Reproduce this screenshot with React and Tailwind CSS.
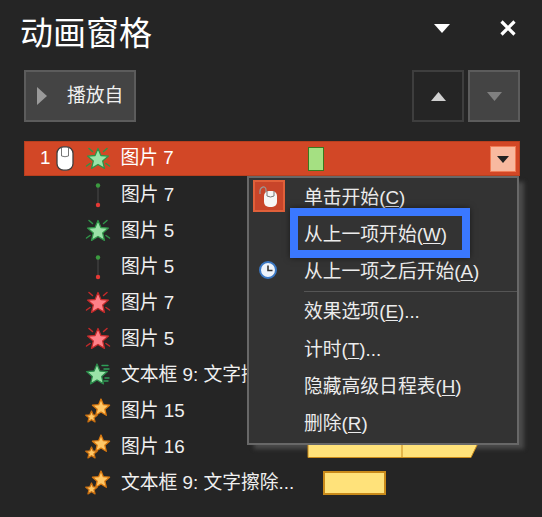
const cjk = { fontFamily: '"Liberation Sans","Noto Sans CJK SC",sans-serif' };

function Star({ fill, stroke, cx = 12, cy = 12, r = 9 }) {
  const pts = [];
  for (let i = 0; i < 10; i++) {
    const rad = i % 2 === 0 ? r : r * 0.45;
    const a = -Math.PI / 2 + (i * Math.PI) / 5;
    pts.push(`${(cx + rad * Math.cos(a)).toFixed(2)},${(cy + rad * Math.sin(a)).toFixed(2)}`);
  }
  return <polygon points={pts.join(" ")} fill={fill} stroke={stroke} strokeWidth="1.3" strokeLinejoin="round" />;
}

function Burst({ fill, stroke }) {
  return (
    <svg width="26" height="26" viewBox="0 0 26 26" className="shrink-0">
      <g stroke={stroke} strokeWidth="1.5" strokeLinecap="round">
        <path d="M4 2.5 L7.5 5.5M22 2.5 L18.5 5.5M1.5 20 L5 17.5M24.5 20 L21 17.5" />
      </g>
      <Star fill={fill} stroke={stroke} cx={13} cy={13.5} r={11} />
    </svg>
  );
}

function Entrance() {
  return (
    <svg width="26" height="26" viewBox="0 0 26 26" className="shrink-0">
      <g stroke="#2f9e58" strokeWidth="1.4" strokeLinecap="round">
        <path d="M17 3.5 H23M19 7 H24M20 16 H24M19 19 H23" />
      </g>
      <Star fill="#9be3a8" stroke="#2b8a4a" cx={12} cy={13} r={11} />
    </svg>
  );
}

function Stars() {
  return (
    <svg width="26" height="26" viewBox="0 0 26 26" className="shrink-0">
      <Star fill="#ffc766" stroke="#d9780f" cx={16} cy={10} r={9} />
      <Star fill="#ffc766" stroke="#c96f10" cx={6.5} cy={19} r={6} />
    </svg>
  );
}

function Motion() {
  return (
    <svg width="26" height="26" viewBox="0 0 26 26" className="shrink-0">
      <line x1="13" y1="4" x2="13" y2="22" stroke="#4a4a4a" strokeWidth="1" />
      <circle cx="13" cy="3.5" r="2.2" fill="#3b9a3f" />
      <circle cx="13" cy="23" r="2.2" fill="#e53935" />
    </svg>
  );
}

function MouseIcon({ className }) {
  return (
    <svg width="18" height="25" viewBox="0 0 18 25" className={className}>
      <rect x="1" y="0.8" width="16" height="23.4" rx="6.5" fill="#ffffff" stroke="#3f3f3f" strokeWidth="1.3" />
      <path d="M5.5 1.5 V10 Q9 11.5 12.5 10 V1.5" fill="none" stroke="#666" strokeWidth="0.9" />
    </svg>
  );
}

const green = <Burst fill="#9be3a8" stroke="#2f9448" />;
const red = <Burst fill="#ff8088" stroke="#c42a2a" />;

const rows = [
  { icon: <Motion />, t: "图片 7" },
  { icon: green, t: "图片 5" },
  { icon: <Motion />, t: "图片 5" },
  { icon: red, t: "图片 7" },
  { icon: red, t: "图片 5" },
  { icon: <Entrance />, t: "文本框 9: 文字擦除..." },
  { icon: <Stars />, t: "图片 15" },
  {
    icon: <Stars />,
    t: "图片 16",
    bar: (
      <svg width="176" height="30" viewBox="0 0 176 30" className="absolute left-[307px] top-0 z-[1]">
        <path d="M1 6 H175 L164 28.5 H1 Z" fill="#ffe27a" stroke="#c98a1a" strokeWidth="1" />
        <line x1="95" y1="6" x2="95" y2="28" stroke="#c98a1a" />
      </svg>
    ),
  },
  {
    icon: <Stars />,
    t: "文本框 9: 文字擦除...",
    bar: <div className="absolute left-[323px] top-[6px] h-6 w-[63px] border-2 border-[#c98a1a] bg-[#ffe27a]" />,
  },
];

const menu = [
  { t: "单击开始", k: "C", h: 38, first: true },
  { t: "从上一项开始", k: "W", h: 37 },
  { t: "从上一项之后开始", k: "A", h: 37, clock: true },
  { sep: true },
  { t: "效果选项", k: "E", tail: "...", h: 40 },
  { t: "计时", k: "T", tail: "...", h: 37 },
  { t: "隐藏高级日程表", k: "H", h: 37 },
  { t: "删除", k: "R", h: 37 },
];

export default function App() {
  return (
    <div className="relative h-[517px] w-[542px] overflow-hidden bg-[#252525] text-[#f0f0f0]" style={cjk}>
      <div className="flex h-[70px] items-start justify-between pl-5 pr-[25px]">
        <div className="mt-[14px] text-[33px] leading-10 text-white">动画窗格</div>
        <div className="mt-[19px] flex items-center gap-[49px]">
          <svg width="16" height="10" viewBox="0 0 16 10"><path d="M0 1 H16 L8 10 Z" fill="#fff" /></svg>
          <svg width="18" height="18" viewBox="0 0 18 18"><path d="M2.5 2.5 L15.5 15.5M15.5 2.5 L2.5 15.5" stroke="#fff" strokeWidth="3.2" /></svg>
        </div>
      </div>

      <div className="flex h-[71px] items-start justify-between pl-6 pr-[22px]">
        <div className="flex h-[52px] w-[112px] items-center border-2 border-[#5c5c5c] bg-[#444444]">
          <svg width="10" height="18" viewBox="0 0 10 18" className="ml-[11px]"><path d="M0 0 L10 9 L0 18 Z" fill="#9a9a9a" /></svg>
          <span className="ml-5 text-[18.8px] text-[#f0f0f0]">播放自</span>
        </div>
        <div className="flex gap-1">
          <div className="flex h-[52px] w-[52px] items-center justify-center border-2 border-[#3e3e3e]">
            <svg width="15" height="9" viewBox="0 0 15 9"><path d="M0 9 H15 L7.5 0 Z" fill="#d0d0d0" /></svg>
          </div>
          <div className="flex h-[52px] w-[52px] items-center justify-center border-2 border-[#5c5c5c] bg-[#444444]">
            <svg width="15" height="9" viewBox="0 0 15 9"><path d="M0 0 H15 L7.5 9 Z" fill="#808080" /></svg>
          </div>
        </div>
      </div>

      <div className="relative mx-6 flex h-[35px] w-[496px] items-center border border-[#b83f1e] bg-[#d24726] text-white">
        <span className="ml-[15px] text-[18.8px]">1</span>
        <MouseIcon className="ml-[6px]" />
        <div className="ml-[11px]"><Burst fill="#9be3a8" stroke="#2f9448" /></div>
        <span className="ml-[9px] text-[18.8px]">图片 7</span>
        <div className="absolute left-[283px] top-[5px] h-[24px] w-[16px] border border-[#3a7a1e] bg-[#a5e082]" />
        <div className="absolute right-[3px] top-[4px] flex h-[26px] w-[26px] items-center justify-center border border-[#f07c55] bg-[#f8b99f]">
          <svg width="12" height="7" viewBox="0 0 12 7"><path d="M0 0 H12 L6 7 Z" fill="#222" /></svg>
        </div>
      </div>

      <div className="mt-[1px]">
        {rows.map((r, i) => (
          <div key={i} className="relative flex h-9 items-center">
            <div className="ml-[85px] w-[26px]">{r.icon}</div>
            <span className="ml-[10px] text-[18.8px] whitespace-nowrap">{r.t}</span>
            {r.bar}
          </div>
        ))}
      </div>

      <div className="absolute left-[254px] top-[182px] h-[267px] w-[270px] bg-[#4a4a4a] blur-[2px]" />

      <div className="absolute left-[247px] top-[176px] z-[2] flex h-[269px] w-[272px] flex-col border-2 border-[#686868] bg-[#333333] pl-[55px] pt-[1px] text-[18.8px] text-[#ececec]">
        {menu.map((m, i) =>
          m.sep ? (
            <div key={i} className="h-px shrink-0 bg-[#555555]" />
          ) : (
            <div key={i} className="relative flex shrink-0 items-center" style={{ height: m.h }}>
              {m.first && (
                <div className="absolute left-[-51px] top-[1px] flex h-8 w-8 items-center justify-center border-2 border-[#e0603a] bg-[#c8452a]">
                  <svg width="26" height="26" viewBox="0 0 26 26">
                    <path d="M4 11 C3 3 10 2 10 7 V9" fill="none" stroke="#999" strokeWidth="1.2" />
                    <rect x="8" y="8" width="13" height="16" rx="5" fill="#f6f6f6" />
                    <path d="M11 8 V13 Q14.5 15 18 13 V8" fill="none" stroke="#777" strokeWidth="1" />
                  </svg>
                </div>
              )}
              {m.clock && (
                <svg width="18" height="18" viewBox="0 0 18 18" className="absolute left-[-45px] top-[7px]">
                  <circle cx="9" cy="9" r="8" fill="#eef3fa" stroke="#3b78c4" strokeWidth="2" />
                  <path d="M9 4.5 V9.5 H13.5" fill="none" stroke="#333" strokeWidth="1.6" />
                </svg>
              )}
              <span className="whitespace-nowrap">
                {m.t}(<span className="underline underline-offset-2">{m.k}</span>){m.tail}
              </span>
            </div>
          )
        )}
      </div>

      <div className="absolute left-[290px] top-[208px] z-[3] h-[50px] w-[180px] border-[8px] border-[#3a78ff] shadow-[0_0_6px_rgba(0,0,0,0.5)]" />
    </div>
  );
}
